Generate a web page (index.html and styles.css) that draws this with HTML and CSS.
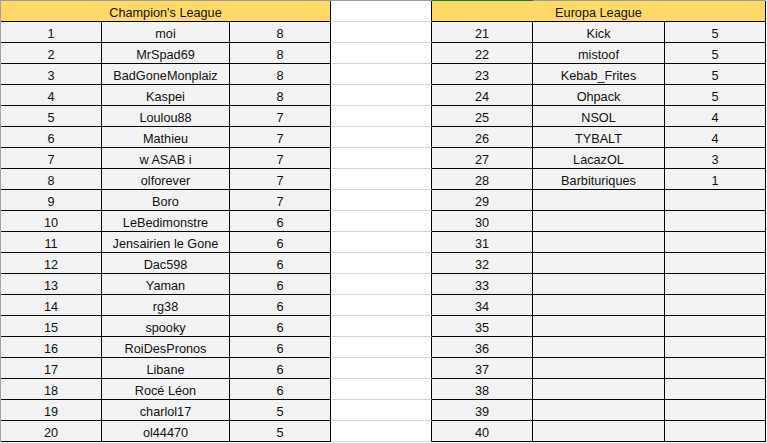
FILE: index.html
```html
<!DOCTYPE html>
<html lang="fr">
<head>
<meta charset="utf-8">
<title>Classement</title>
<link rel="stylesheet" href="styles.css">
</head>
<body>
<div class="sheet">
  <div class="strip"></div><div class="strip"></div><div class="strip"></div><div class="strip"></div><div class="strip sel"></div><div class="strip"></div><div class="strip"></div>

  <div class="hd">Champion's League</div><div class="gap"></div><div class="hd">Europa League</div>

  <div class="c">1</div><div class="c">moi</div><div class="c">8</div><div class="gap"></div><div class="c">21</div><div class="c">Kick</div><div class="c">5</div>
  <div class="c">2</div><div class="c">MrSpad69</div><div class="c">8</div><div class="gap"></div><div class="c">22</div><div class="c">mistoof</div><div class="c">5</div>
  <div class="c">3</div><div class="c">BadGoneMonplaiz</div><div class="c">8</div><div class="gap"></div><div class="c">23</div><div class="c">Kebab_Frites</div><div class="c">5</div>
  <div class="c">4</div><div class="c">Kaspei</div><div class="c">8</div><div class="gap"></div><div class="c">24</div><div class="c">Ohpack</div><div class="c">5</div>
  <div class="c">5</div><div class="c">Loulou88</div><div class="c">7</div><div class="gap"></div><div class="c">25</div><div class="c">NSOL</div><div class="c">4</div>
  <div class="c">6</div><div class="c">Mathieu</div><div class="c">7</div><div class="gap"></div><div class="c">26</div><div class="c">TYBALT</div><div class="c">4</div>
  <div class="c">7</div><div class="c">w ASAB i</div><div class="c">7</div><div class="gap"></div><div class="c">27</div><div class="c">LacazOL</div><div class="c">3</div>
  <div class="c">8</div><div class="c">olforever</div><div class="c">7</div><div class="gap"></div><div class="c">28</div><div class="c">Barbituriques</div><div class="c">1</div>
  <div class="c">9</div><div class="c">Boro</div><div class="c">7</div><div class="gap"></div><div class="c">29</div><div class="c"></div><div class="c"></div>
  <div class="c">10</div><div class="c">LeBedimonstre</div><div class="c">6</div><div class="gap"></div><div class="c">30</div><div class="c"></div><div class="c"></div>
  <div class="c">11</div><div class="c">Jensairien le Gone</div><div class="c">6</div><div class="gap"></div><div class="c">31</div><div class="c"></div><div class="c"></div>
  <div class="c">12</div><div class="c">Dac598</div><div class="c">6</div><div class="gap"></div><div class="c">32</div><div class="c"></div><div class="c"></div>
  <div class="c">13</div><div class="c">Yaman</div><div class="c">6</div><div class="gap"></div><div class="c">33</div><div class="c"></div><div class="c"></div>
  <div class="c">14</div><div class="c">rg38</div><div class="c">6</div><div class="gap"></div><div class="c">34</div><div class="c"></div><div class="c"></div>
  <div class="c">15</div><div class="c">spooky</div><div class="c">6</div><div class="gap"></div><div class="c">35</div><div class="c"></div><div class="c"></div>
  <div class="c">16</div><div class="c">RoiDesPronos</div><div class="c">6</div><div class="gap"></div><div class="c">36</div><div class="c"></div><div class="c"></div>
  <div class="c">17</div><div class="c">Libane</div><div class="c">6</div><div class="gap"></div><div class="c">37</div><div class="c"></div><div class="c"></div>
  <div class="c">18</div><div class="c">Rocé Léon</div><div class="c">6</div><div class="gap"></div><div class="c">38</div><div class="c"></div><div class="c"></div>
  <div class="c">19</div><div class="c">charlol17</div><div class="c">5</div><div class="gap"></div><div class="c">39</div><div class="c"></div><div class="c"></div>
  <div class="c">20</div><div class="c">ol44470</div><div class="c">5</div><div class="gap"></div><div class="c">40</div><div class="c"></div><div class="c"></div>
</div>
</body>
</html>
```
FILE: styles.css
```css
html, body {
  margin: 0;
  padding: 0;
  background: #ffffff;
}
body {
  width: 767px;
  height: 443px;
  overflow: hidden;
  font-family: "Liberation Sans", Arial, sans-serif;
  font-size: 12.7px;
  color: #111111;
}
.sheet {
  display: grid;
  grid-template-columns: 101px 128px 101px 101px 101px 132px 101px;
  grid-template-rows: 1px 21px;
  grid-auto-rows: 21px;
  border-left: 1px solid #a3a3a3;
  width: 766px;
}
.strip {
  background: #9e9e9e;
}
.strip.sel {
  background: #217346;
}
.c, .hd, .gap {
  box-sizing: border-box;
  border-right: 1px solid #000;
  border-bottom: 1px solid #000;
  text-align: center;
  line-height: 20px;
  padding-top: 2px;
  white-space: nowrap;
  overflow: hidden;
}
.c {
  background: #f2f2f2;
}
.hd {
  grid-column: span 3;
  background: #ffd966;
}
.gap {
  background: #ffffff;
  border-bottom-color: #d4d4d4;
}
```
